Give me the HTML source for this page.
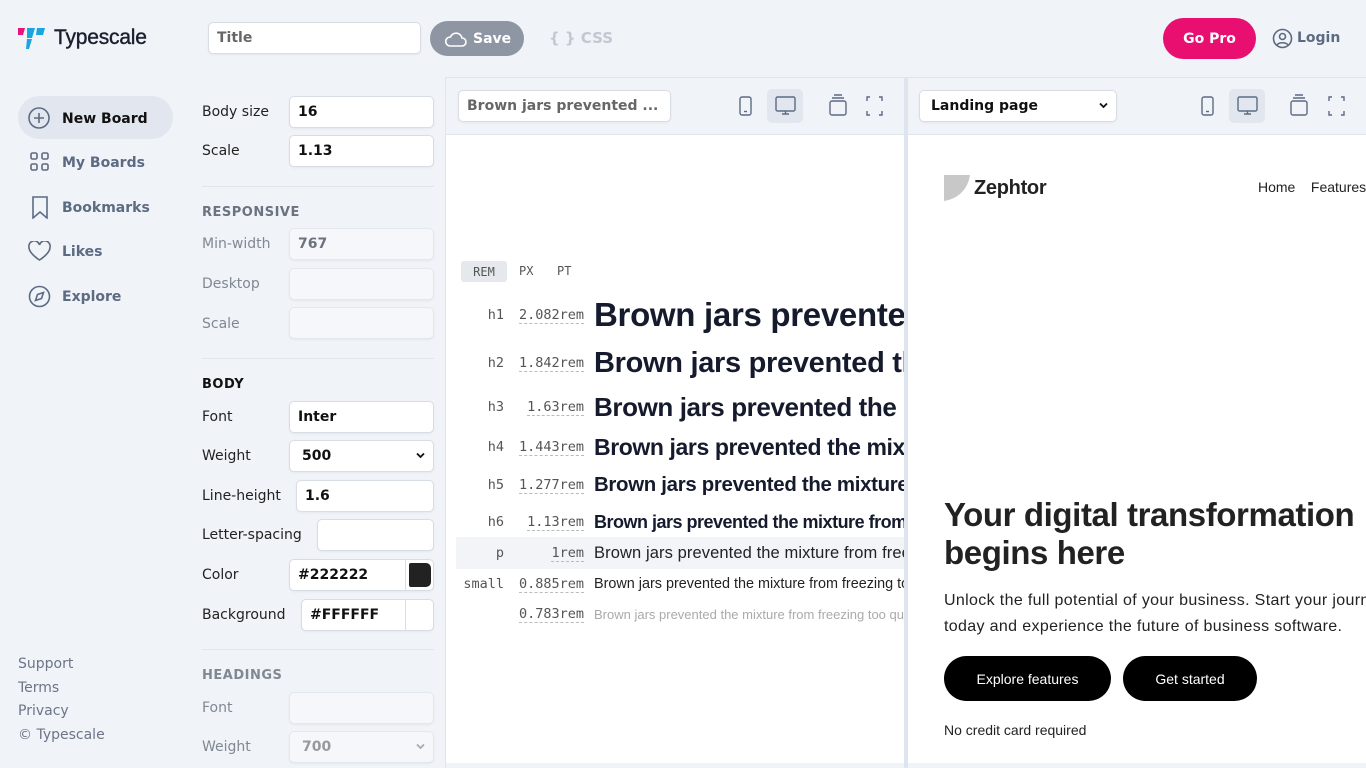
<!DOCTYPE html>
<html><head><meta charset="utf-8"><style>
*{box-sizing:border-box;margin:0;padding:0}
body{width:1366px;height:768px;overflow:hidden;background:#f0f3f8;font-family:"DejaVu Sans",sans-serif;color:#1f2937;position:relative}
.a{position:absolute}
.inp{position:absolute;background:#fff;border:1px solid #d8dde5;border-radius:5px;font-size:14px;font-weight:bold;padding:0 8px;display:flex;align-items:center;color:#111;box-shadow:0 1px 2px rgba(0,0,0,.05)}
.inp.dis{background:#f5f7fa;color:#6b7280;border-color:#e3e7ee}
.lbl{position:absolute;font-size:14px;color:#222;left:202px}
.lbl.dis{color:#808893}
.sec{position:absolute;left:202px;font-size:13px;font-weight:bold;letter-spacing:.5px}
.hr{position:absolute;left:202px;width:232px;height:1px;background:#e2e6ec}
.nav{position:absolute;left:62px;font-size:14px;font-weight:bold;color:#5d6b82}
.foot{position:absolute;left:18px;font-size:14px;color:#6b7587}
.mono{font-family:"DejaVu Sans Mono",monospace;font-size:13.5px;color:#555}
.row{position:absolute;left:456px;width:448px;display:flex;align-items:center}
.row .t{width:48px;text-align:right;padding-right:0}
.row .v{width:80px;text-align:right;}
.row .v span{border-bottom:1px dashed #bbb}
.row .s{margin-left:10px;white-space:nowrap;overflow:hidden;font-family:"Liberation Sans",sans-serif;font-weight:bold;color:#151b2c;flex:1}
.chev{position:absolute;right:8px;top:50%;margin-top:-4px}
</style></head><body>
<!-- logo -->
<svg class="a" style="left:18px;top:28px" width="33" height="22" viewBox="0 0 33 22"><path d="M0 0h7l-2 7H0z" fill="#e8127c"/><path d="M9 0h8l-3 10h-5z" fill="#1aa5e0"/><path d="M19 0h8l-2 7h-7z" fill="#1aa5e0"/><path d="M9 11h5l-3 10H8z" fill="#1aa5e0"/></svg>
<div class="a" style="left:54px;top:26px;font-size:21px;font-family:'Liberation Sans',sans-serif;color:#1a1f2e;letter-spacing:-.2px;-webkit-text-stroke:.4px #1a1f2e">Typescale</div>
<div class="inp" style="left:208px;top:22px;width:213px;height:32px;color:#666">Title</div>
<div class="a" style="left:430px;top:21px;width:94px;height:35px;border-radius:18px;background:#8e96a3;color:#fff;font-size:14px;font-weight:bold;display:flex;align-items:center;padding-left:14px;gap:5px"><svg width="24" height="18" viewBox="0 0 24 18"><path d="M6 16h12a4 4 0 0 0 0-8 6 6 0 0 0-11.5-1A4.5 4.5 0 0 0 6 16z" fill="none" stroke="#fff" stroke-width="1.6"/></svg>Save</div>
<div class="a" style="left:549px;top:29px;font-size:15px;font-weight:bold;color:#c2c8d2">{ } CSS</div>
<div class="a" style="left:1163px;top:18px;width:93px;height:41px;border-radius:21px;background:#e90f70;color:#fff;font-size:14px;font-weight:bold;display:flex;align-items:center;justify-content:center">Go Pro</div>
<svg class="a" style="left:1272px;top:28px" width="21" height="21" viewBox="0 0 21 21" fill="none" stroke="#5d6b82" stroke-width="1.6"><circle cx="10.5" cy="10.5" r="9"/><circle cx="10.5" cy="8.5" r="3"/><path d="M5 17c2-3 9-3 11 0"/></svg>
<div class="a" style="left:1297px;top:30px;font-size:14px;font-weight:bold;color:#5d6b82">Login</div>

<!-- left nav -->
<div class="a" style="left:18px;top:96px;width:155px;height:43px;border-radius:22px;background:#e2e7ef"></div>
<svg class="a" style="left:28px;top:107px" width="22" height="22" viewBox="0 0 22 22" fill="none" stroke="#5d6b82" stroke-width="1.6"><circle cx="11" cy="11" r="10"/><path d="M11 6v10M6 11h10"/></svg>
<div class="nav" style="top:111px;color:#111">New Board</div>
<svg class="a" style="left:30px;top:152px" width="20" height="20" viewBox="0 0 20 20" fill="none" stroke="#5d6b82" stroke-width="1.6"><rect x="1" y="1" width="6" height="6" rx="1.5"/><rect x="12" y="1" width="6" height="6" rx="1.5"/><rect x="1" y="12" width="6" height="6" rx="1.5"/><rect x="12" y="12" width="6" height="6" rx="1.5"/></svg>
<div class="nav" style="top:155px">My Boards</div>
<svg class="a" style="left:31px;top:196px" width="18" height="23" viewBox="0 0 18 23" fill="none" stroke="#5d6b82" stroke-width="1.6"><path d="M2 1h14v21l-7-6-7 6z"/></svg>
<div class="nav" style="top:200px">Bookmarks</div>
<svg class="a" style="left:28px;top:241px" width="23" height="21" viewBox="0 0 23 21" fill="none" stroke="#5d6b82" stroke-width="1.6"><path d="M11.5 19S1 12.5 1 6.5A5 5 0 0 1 11.5 4 5 5 0 0 1 22 6.5C22 12.5 11.5 19 11.5 19z"/></svg>
<div class="nav" style="top:244px">Likes</div>
<svg class="a" style="left:28px;top:285px" width="23" height="23" viewBox="0 0 23 23" fill="none" stroke="#5d6b82" stroke-width="1.6"><circle cx="11.5" cy="11.5" r="10"/><path d="M15.5 7.5l-2 6-6 2 2-6z"/></svg>
<div class="nav" style="top:289px">Explore</div>
<div class="foot" style="top:656px">Support</div>
<div class="foot" style="top:680px">Terms</div>
<div class="foot" style="top:703px">Privacy</div>
<div class="foot" style="top:727px">© Typescale</div>

<!-- settings -->
<div class="lbl" style="top:104px">Body size</div><div class="inp" style="left:289px;top:96px;width:145px;height:32px">16</div>
<div class="lbl" style="top:143px">Scale</div><div class="inp" style="left:289px;top:135px;width:145px;height:32px">1.13</div>
<div class="hr" style="top:186px"></div>
<div class="sec" style="top:205px;color:#6b7280">RESPONSIVE</div>
<div class="lbl dis" style="top:236px">Min-width</div><div class="inp dis" style="left:289px;top:228px;width:145px;height:32px">767</div>
<div class="lbl dis" style="top:276px">Desktop</div><div class="inp dis" style="left:289px;top:268px;width:145px;height:32px"></div>
<div class="lbl dis" style="top:316px">Scale</div><div class="inp dis" style="left:289px;top:307px;width:145px;height:32px"></div>
<div class="hr" style="top:358px"></div>
<div class="sec" style="top:377px;color:#111">BODY</div>
<div class="lbl" style="top:409px">Font</div><div class="inp" style="left:289px;top:401px;width:145px;height:32px">Inter</div>
<div class="lbl" style="top:448px">Weight</div><div class="inp" style="left:289px;top:440px;width:145px;height:32px;padding-left:12px">500<svg class="chev" width="9" height="7" viewBox="0 0 9 7"><path d="M1 1.5l3.5 3.5 3.5-3.5" fill="none" stroke="#111" stroke-width="1.8"/></svg></div>
<div class="lbl" style="top:488px">Line-height</div><div class="inp" style="left:296px;top:480px;width:138px;height:32px">1.6</div>
<div class="lbl" style="top:527px">Letter-spacing</div><div class="inp" style="left:317px;top:519px;width:117px;height:32px"></div>
<div class="lbl" style="top:567px">Color</div><div class="inp" style="left:289px;top:559px;width:145px;height:32px">#222222<span style="position:absolute;left:115px;top:0;width:1px;height:30px;background:#ddd"></span><span style="position:absolute;left:119px;top:3px;width:22px;height:24px;background:#222;border-radius:2px 5px 5px 2px"></span></div>
<div class="lbl" style="top:607px">Background</div><div class="inp" style="left:301px;top:599px;width:133px;height:32px">#FFFFFF<span style="position:absolute;left:103px;top:0;width:1px;height:30px;background:#ddd"></span></div>
<div class="hr" style="top:649px"></div>
<div class="sec" style="top:668px;color:#808893">HEADINGS</div>
<div class="lbl dis" style="top:700px">Font</div><div class="inp dis" style="left:289px;top:692px;width:145px;height:32px"></div>
<div class="lbl dis" style="top:739px">Weight</div><div class="inp dis" style="left:289px;top:731px;width:145px;height:32px;padding-left:12px;color:#999">700<svg class="chev" width="9" height="7" viewBox="0 0 9 7"><path d="M1 1.5l3.5 3.5 3.5-3.5" fill="none" stroke="#aaa" stroke-width="1.8"/></svg></div>

<!-- middle panel -->
<div class="a" style="left:445px;top:77px;width:921px;height:691px;border-top:1px solid #dfe5ee;border-left:1px solid #dfe5ee"></div>
<div class="a" style="left:446px;top:134px;width:458px;height:629px;background:#fff;border-top:1px solid #dfe5ee"></div>
<div class="a" style="left:908px;top:134px;width:458px;height:629px;background:#fff;border-top:1px solid #dfe5ee"></div>
<div class="a" style="left:904px;top:78px;width:4px;height:690px;background:#dfe5ee"></div>
<div class="inp" style="left:458px;top:90px;width:213px;height:32px;color:#666">Brown jars prevented ...</div>
<div class="inp" style="left:919px;top:90px;width:198px;height:32px;padding-left:11px">Landing page<svg class="chev" width="9" height="7" viewBox="0 0 9 7"><path d="M1 1.5l3.5 3.5 3.5-3.5" fill="none" stroke="#111" stroke-width="1.8"/></svg></div>
<!-- toolbar icons -->
<svg class="a" style="left:735px;top:89px" width="160" height="34" viewBox="0 0 160 34"><rect x="32" y="0" width="36" height="34" rx="5" fill="#e2e7ef"/><g fill="none" stroke="#5d6b82" stroke-width="1.4"><rect x="5" y="8" width="11" height="18" rx="2"/><path d="M9 22.5h3"/><rect x="41" y="8" width="19" height="14" rx="1.5"/><path d="M47 25h7M50.5 22v3"/><rect x="95" y="12" width="16" height="14" rx="2"/><path d="M97 9h12M99 6h8"/><path d="M135 8h-3v4M144 8h3v4M135 26h-3v-4M144 26h3v-4"/></g></svg>
<svg class="a" style="left:1197px;top:89px" width="160" height="34" viewBox="0 0 160 34"><rect x="32" y="0" width="36" height="34" rx="5" fill="#e2e7ef"/><g fill="none" stroke="#5d6b82" stroke-width="1.4"><rect x="5" y="8" width="11" height="18" rx="2"/><path d="M9 22.5h3"/><rect x="41" y="8" width="19" height="14" rx="1.5"/><path d="M47 25h7M50.5 22v3"/><rect x="94" y="12" width="16" height="14" rx="2"/><path d="M96 9h12M98 6h8"/><path d="M135 8h-3v4M144 8h3v4M135 26h-3v-4M144 26h3v-4"/></g></svg>

<div class="a mono" style="left:461px;top:261px;width:46px;height:21px;background:#e5e8ed;border-radius:3px;font-size:12px;display:flex;align-items:center;justify-content:center">REM</div>
<div class="a mono" style="left:519px;top:264px;font-size:12px">PX</div>
<div class="a mono" style="left:557px;top:264px;font-size:12px">PT</div>

<div class="row" style="top:294px;height:42px"><span class="t mono">h1</span><span class="v mono"><span>2.082rem</span></span><span class="s" style="font-size:33px;letter-spacing:-.3px">Brown jars prevented the mixture</span></div>
<div class="row" style="top:344px;height:38px"><span class="t mono">h2</span><span class="v mono"><span>1.842rem</span></span><span class="s" style="font-size:29px;letter-spacing:-.3px">Brown jars prevented the mixture</span></div>
<div class="row" style="top:390px;height:34px"><span class="t mono">h3</span><span class="v mono"><span>1.63rem</span></span><span class="s" style="font-size:26px;letter-spacing:-.4px">Brown jars prevented the mixture</span></div>
<div class="row" style="top:432px;height:30px"><span class="t mono">h4</span><span class="v mono"><span>1.443rem</span></span><span class="s" style="font-size:23px;letter-spacing:-.4px">Brown jars prevented the mixture</span></div>
<div class="row" style="top:471px;height:28px"><span class="t mono">h5</span><span class="v mono"><span>1.277rem</span></span><span class="s" style="font-size:20.4px;letter-spacing:-.3px">Brown jars prevented the mixture from</span></div>
<div class="row" style="top:509px;height:26px"><span class="t mono">h6</span><span class="v mono"><span>1.13rem</span></span><span class="s" style="font-size:18px;letter-spacing:-.5px">Brown jars prevented the mixture from freezing</span></div>
<div class="row" style="top:537px;height:32px;background:#f2f4f7"><span class="t mono">p</span><span class="v mono"><span>1rem</span></span><span class="s" style="font-size:16.5px;font-weight:normal;color:#222;letter-spacing:.1px">Brown jars prevented the mixture from freezing</span></div>
<div class="row" style="top:573px;height:22px"><span class="t mono">small</span><span class="v mono"><span>0.885rem</span></span><span class="s" style="font-size:14.4px;font-weight:normal;color:#222">Brown jars prevented the mixture from freezing too</span></div>
<div class="row" style="top:603px;height:22px"><span class="t mono"></span><span class="v mono"><span>0.783rem</span></span><span class="s" style="font-size:13px;font-weight:normal;color:#aaa">Brown jars prevented the mixture from freezing too quickly</span></div>

<!-- right preview -->
<svg class="a" style="left:944px;top:175px" width="26" height="26" viewBox="0 0 26 26"><path d="M0 0h26C24 14 14 24 0 26z" fill="#c8c8c8"/></svg>
<div class="a" style="left:974px;top:177px;font-family:'Liberation Sans',sans-serif;font-weight:bold;font-size:20px;color:#222;letter-spacing:-.3px">Zephtor</div>
<div class="a" style="left:1258px;top:179px;font-family:'Liberation Sans',sans-serif;font-size:14px;color:#222;white-space:nowrap">Home&nbsp;&nbsp;&nbsp;&nbsp;Features</div>
<div class="a" style="left:944px;top:496px;width:422px;font-family:'Liberation Sans',sans-serif;font-weight:bold;font-size:33px;line-height:38px;color:#222;letter-spacing:-.4px;white-space:nowrap;overflow:hidden">Your digital transformation<br>begins here</div>
<div class="a" style="left:944px;top:588px;width:422px;font-family:'Liberation Sans',sans-serif;font-size:16px;line-height:26px;color:#222;letter-spacing:.35px;white-space:nowrap;overflow:hidden">Unlock the full potential of your business. Start your journey<br>today and experience the future of business software.</div>
<div class="a" style="left:944px;top:656px;width:167px;height:45px;border-radius:23px;background:#000;color:#fff;font-family:'Liberation Sans',sans-serif;font-size:14px;display:flex;align-items:center;justify-content:center">Explore features</div>
<div class="a" style="left:1123px;top:656px;width:134px;height:45px;border-radius:23px;background:#000;color:#fff;font-family:'Liberation Sans',sans-serif;font-size:14px;display:flex;align-items:center;justify-content:center">Get started</div>
<div class="a" style="left:944px;top:722px;font-family:'Liberation Sans',sans-serif;font-size:14px;color:#222">No credit card required</div>
</body></html>
